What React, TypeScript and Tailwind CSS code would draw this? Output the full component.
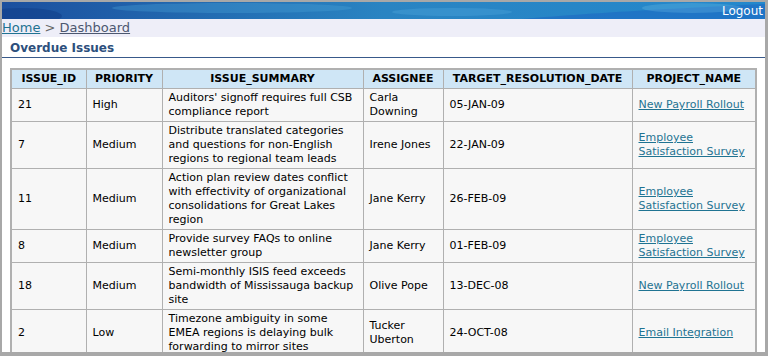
import React from 'react';

interface Issue {
  id: number;
  priority: string;
  summary: string;
  assignee: string;
  date: string;
  project: string;
}

const issues: Issue[] = [
  { id: 21, priority: 'High', summary: "Auditors' signoff requires full CSB compliance report", assignee: 'Carla Downing', date: '05-JAN-09', project: 'New Payroll Rollout' },
  { id: 7, priority: 'Medium', summary: 'Distribute translated categories and questions for non-English regions to regional team leads', assignee: 'Irene Jones', date: '22-JAN-09', project: 'Employee Satisfaction Survey' },
  { id: 11, priority: 'Medium', summary: 'Action plan review dates conflict with effectivity of organizational consolidations for Great Lakes region', assignee: 'Jane Kerry', date: '26-FEB-09', project: 'Employee Satisfaction Survey' },
  { id: 8, priority: 'Medium', summary: 'Provide survey FAQs to online newsletter group', assignee: 'Jane Kerry', date: '01-FEB-09', project: 'Employee Satisfaction Survey' },
  { id: 18, priority: 'Medium', summary: 'Semi-monthly ISIS feed exceeds bandwidth of Mississauga backup site', assignee: 'Olive Pope', date: '13-DEC-08', project: 'New Payroll Rollout' },
  { id: 2, priority: 'Low', summary: 'Timezone ambiguity in some EMEA regions is delaying bulk forwarding to mirror sites', assignee: 'Tucker Uberton', date: '24-OCT-08', project: 'Email Integration' },
];

const columns = ['ISSUE_ID', 'PRIORITY', 'ISSUE_SUMMARY', 'ASSIGNEE', 'TARGET_RESOLUTION_DATE', 'PROJECT_NAME'];
const widths = [75, 76, 201, 80, 189, 124];

export default function App() {
  return (
    <div className="w-[768px] h-[356px] overflow-hidden bg-white border-[#a8a8a8] border-t-2 border-l-2 border-r-[3px] border-b-4 font-['DejaVu_Sans',sans-serif]">
      {/* Banner */}
      <div className="relative h-[17px] overflow-hidden bg-gradient-to-r from-[#1c4f9e] via-[#2a84c2] to-[#2388cc]">
        <svg className="absolute inset-0" width="763" height="17" viewBox="0 0 763 17" preserveAspectRatio="none">
          <ellipse cx="20" cy="14" rx="40" ry="8" fill="#0f3c86" opacity="0.5" />
          <ellipse cx="230" cy="6" rx="120" ry="5" fill="#4aa4d8" opacity="0.35" />
          <ellipse cx="450" cy="10" rx="60" ry="4" fill="#5ab0e0" opacity="0.3" />
          <path d="M520 17 C 580 12, 640 8, 763 2 L 763 17 Z" fill="#1a5fc0" opacity="0.45" />
          <ellipse cx="690" cy="6" rx="50" ry="5" fill="#6cbce6" opacity="0.3" />
        </svg>
        <div className="relative flex justify-end pr-[2px] text-[12px] leading-[18px] text-white">Logout</div>
      </div>

      {/* Breadcrumb */}
      <div className="h-[18px] bg-[#eeeef8] text-[13px] leading-[18px]">
        <a href="#" className="text-[#1f7392] underline">Home</a>
        <span className="text-[#666]"> &gt; </span>
        <a href="#" className="text-[#4c5870] underline">Dashboard</a>
      </div>

      {/* Region title */}
      <div className="mt-[5px] pl-[8px] pb-[2px] border-b border-[#38598a] text-[12px] leading-[13px] font-bold text-[#2d4f7c]">
        Overdue Issues
      </div>

      <div className="pt-[10px] pl-[8px]">
        <table className="table-fixed border-collapse border-2 border-[#b0b0b0] w-[745px] text-[11px] leading-[14px]">
          <colgroup>
            {widths.map((w, i) => (
              <col key={i} style={{ width: w }} />
            ))}
          </colgroup>
          <thead>
            <tr className="bg-[#cfe6f6]">
              {columns.map((c) => (
                <th key={c} className="border border-[#b0b0b0] px-[2px] py-[2px] font-bold text-center text-black whitespace-nowrap">
                  {c}
                </th>
              ))}
            </tr>
          </thead>
          <tbody>
            {issues.map((r) => (
              <tr key={r.id} className="bg-[#f7f7f7] text-black align-middle">
                <td className="border border-[#b0b0b0] px-[6px] py-[2px]">{r.id}</td>
                <td className="border border-[#b0b0b0] px-[6px] py-[2px]">{r.priority}</td>
                <td className="border border-[#b0b0b0] px-[6px] py-[2px]">{r.summary}</td>
                <td className="border border-[#b0b0b0] px-[6px] py-[2px]">{r.assignee}</td>
                <td className="border border-[#b0b0b0] px-[6px] py-[2px]">{r.date}</td>
                <td className="border border-[#b0b0b0] px-[6px] py-[2px]">
                  <a href="#" className="text-[#1f7392] underline">{r.project}</a>
                </td>
              </tr>
            ))}
          </tbody>
        </table>
      </div>
    </div>
  );
}
